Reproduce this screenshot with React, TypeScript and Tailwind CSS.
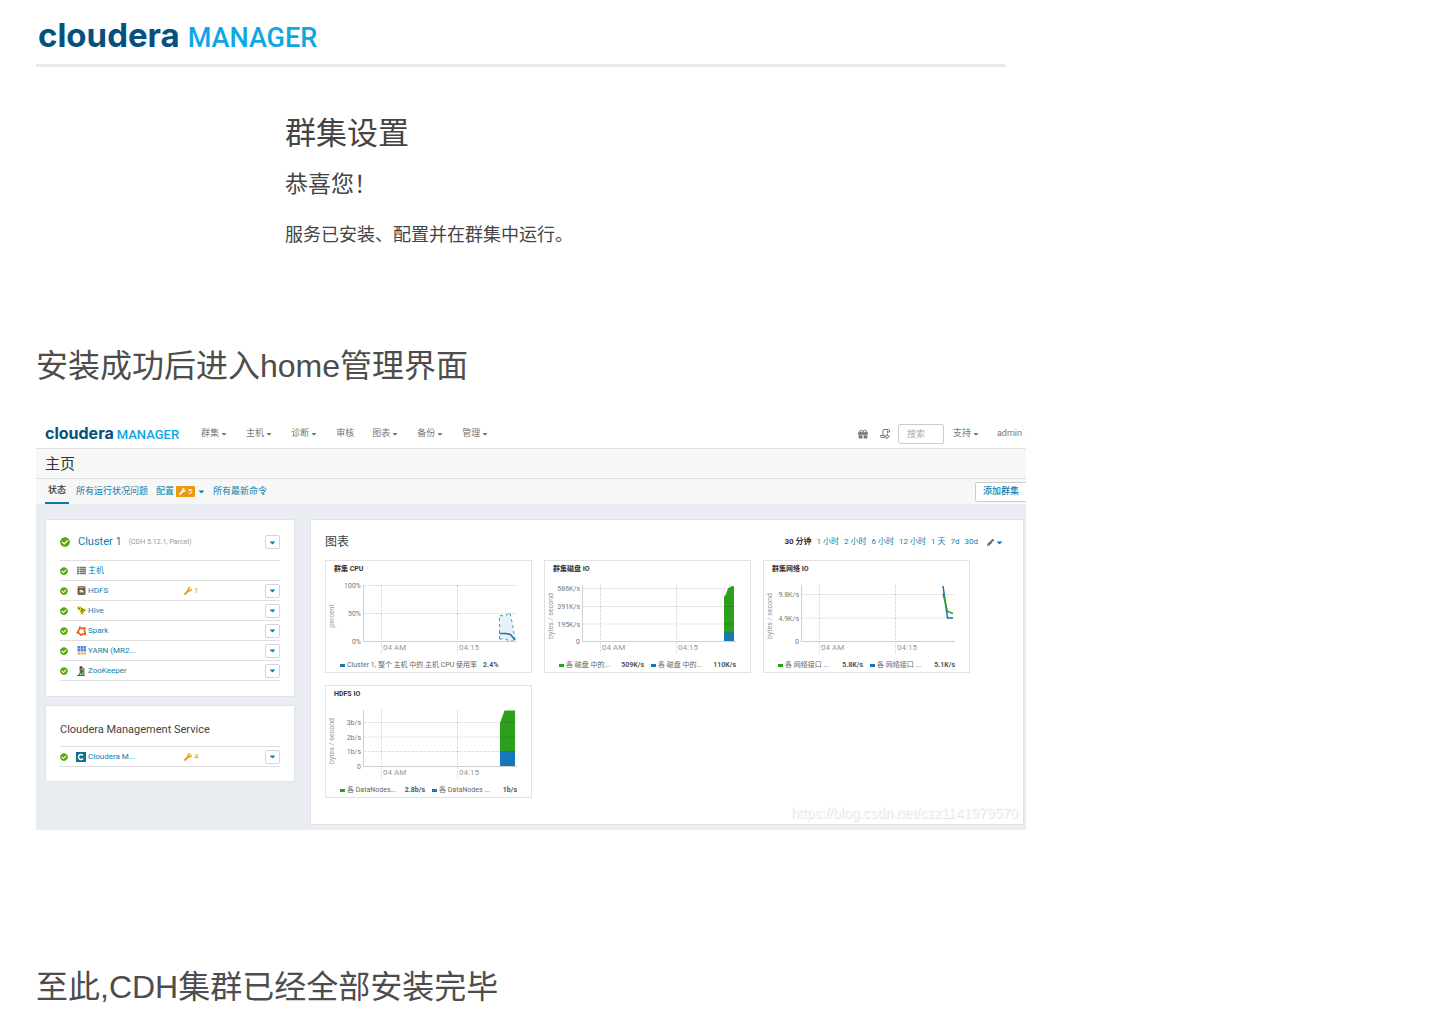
import type { ReactNode } from 'react';
import { FaCaretDown, FaCheckCircle, FaGift, FaPencilAlt, FaWrench } from 'react-icons/fa';

const NAV_ITEMS = [
  { label: '群集', menu: true },
  { label: '主机', menu: true },
  { label: '诊断', menu: true },
  { label: '审核', menu: false },
  { label: '图表', menu: true },
  { label: '备份', menu: true },
  { label: '管理', menu: true },
];

const RANGES = ['1 小时', '2 小时', '6 小时', '12 小时', '1 天', '7d', '30d'];

const GREEN = '#2ca01c';
const BLUE = '#1678b8';

const HostsIcon = () => (
  <svg viewBox="0 0 18 18" className="size-[9px]">
    <path d="M0 3h4M0 7h4M0 11h4M0 15h4M5 3h13M5 7h13M5 11h13M5 15h13" stroke="#777" strokeWidth="3" />
  </svg>
);

const HdfsIcon = () => (
  <svg viewBox="0 0 18 18" className="size-[9px]">
    <path d="M3 0h12l2 3v13l-2 2H3l-2-2V3z" fill="#7a6a4c" />
    <path d="M4 1h10v3H4z" fill="#b3a27c" />
    <path d="M3 6h12v8H3z" fill="#55493a" />
    <path d="M5 8l5-1 4 4v2H5z" fill="#e4e0d6" />
  </svg>
);

const HiveIcon = () => (
  <svg viewBox="0 0 18 18" className="size-[9px]">
    <path d="M0 1l7 0 3 3 6 1 2 4-4 4-2 5-5-2-1-5-5-3z" fill="#e8dc1e" />
    <path d="M2 3l4 3M8 3l3 4M7 10l5-2M9 14l4-3M13 7l3 2" stroke="#4a4410" strokeWidth="2" />
  </svg>
);

const SparkIcon = () => (
  <svg viewBox="0 0 18 18" className="size-[10px]">
    <path d="M7 2l3 3 6-2-1 5 2 7-5-1-3 3-3-4-4-1 3-4z" fill="none" stroke="#ea5f24" strokeWidth="3" strokeLinejoin="round" />
  </svg>
);

const YarnIcon = () => (
  <svg viewBox="0 0 18 18" className="size-[9px]">
    <path d="M1 0h5v11H1zM7 0h5v11H7zM13 0h5v11h-5z" fill="#4f86d8" />
    <path d="M1 5h17" stroke="#b9d0f2" />
    <path d="M1 13h5v4H1zM7 13h5v4H7zM13 13h5v4h-5z" fill="#efa45c" />
  </svg>
);

const ZooKeeperIcon = () => (
  <svg viewBox="0 0 18 18" className="size-[10px]">
    <circle cx="9" cy="3" r="3" fill="#6b4a34" />
    <path d="M6 6h6l2 4-2 1v6h-2l-1-4-3 4H4l3-6z" fill="#3c7a3e" />
    <path d="M14 3v14M2 17h14" stroke="#6b5a48" strokeWidth="2" />
  </svg>
);

const ClouderaIcon = () => (
  <svg viewBox="0 0 20 20" className="size-[10px]">
    <rect width="20" height="20" fill="#0f6f8f" />
    <path d="M14 7a5 5 0 1 0 0 6" fill="none" stroke="#fff" strokeWidth="3" />
  </svg>
);

// running commands, a scroll with a small gear in the corner
const CommandsIcon = () => (
  <svg viewBox="0 0 20 20" className="size-[10px]" fill="none" stroke="currentColor" strokeWidth="2">
    <path d="M6 13V3q0-2 2-2h9q2 0 2 2v3h-4V3M15 6v3M1 13h8v4H3q-2 0-2-2z" />
    <circle cx="14" cy="15" r="3" />
    <path d="M14 10v2M14 18v2M9 15h2M17 15h2" />
  </svg>
);

type Service = { name: string; icon: ReactNode; issues?: number; menu?: boolean };

const CLUSTER_SERVICES: Service[] = [
  { name: '主机', icon: <HostsIcon />, menu: false },
  { name: 'HDFS', icon: <HdfsIcon />, issues: 1 },
  { name: 'Hive', icon: <HiveIcon /> },
  { name: 'Spark', icon: <SparkIcon /> },
  { name: 'YARN (MR2...', icon: <YarnIcon /> },
  { name: 'ZooKeeper', icon: <ZooKeeperIcon /> },
];

const MANAGEMENT_SERVICES: Service[] = [{ name: 'Cloudera M...', icon: <ClouderaIcon />, issues: 4 }];

const MenuButton = ({ label }: { label: string }) => (
  <button
    type="button"
    aria-label={label}
    className="flex h-[14px] w-[15px] items-center justify-center rounded-[2px] border border-gray-300 bg-white text-[#0b7fad]"
  >
    <FaCaretDown className="size-[9px]" />
  </button>
);

const ServiceList = ({ services }: { services: Service[] }) => (
  <ul className="border-b border-[#dedede]">
    {services.map((service) => (
      <li key={service.name} className="flex h-5 items-center border-t border-[#dedede] text-[8px]">
        <FaCheckCircle className="mr-2 size-[8px] shrink-0 text-[#5aa60c]" />
        <a href="#" className="flex w-[108px] items-center gap-[2px] text-[#0b7fad]">
          <span className="flex w-[10px] shrink-0 justify-center">{service.icon}</span>
          {service.name}
        </a>
        {service.issues && (
          <a href="#" className="flex items-center gap-[2px] text-[#eb9a10]">
            <FaWrench className="size-[8px]" />
            {service.issues}
          </a>
        )}
        {service.menu !== false && (
          <div className="ml-auto">
            <MenuButton label={service.name} />
          </div>
        )}
      </li>
    ))}
  </ul>
);

type Tick = { y: number; label: string };
type LegendItem = { color: string; label: string; value: string };

type ChartCardProps = {
  title: string;
  unit: string;
  ticks: Tick[];
  legend: LegendItem[];
  children: ReactNode;
};

const ChartCard = ({ title, unit, ticks, legend, children }: ChartCardProps) => (
  <section className="h-[113px] border border-[#e2e2e2] bg-white">
    <h3 className="h-4 pl-2 text-[7px] leading-[17px] font-bold text-[#333]">{title}</h3>
    <svg viewBox="0 0 205 80" className="block h-20 w-full" fontSize="7">
      {children}
      <g stroke="#000" strokeOpacity="0.12" strokeDasharray="3 1">
        {ticks.map((tick) => (
          <path key={tick.label} d={`M38 ${tick.y}H191`} />
        ))}
        <path d="M55.500 8V77M131.500 8V77" />
      </g>
      <path d="M37.500 8V64.500H191" fill="none" stroke="#cfcfcf" />
      {ticks.map((tick) => (
        <text key={tick.label} x="35" y={tick.y + 2.5} textAnchor="end" fill="#777">
          {tick.label}
        </text>
      ))}
      <g fontSize="8" fill="#999">
        <text x="57" y="73">04 AM</text>
        <text x="133" y="73">04:15</text>
      </g>
      <text x="8" y="39" textAnchor="middle" transform="rotate(-90 8 39)" fill="#999">
        {unit}
      </text>
    </svg>
    <ul className="flex h-4 items-center gap-[7px] pl-[14px] text-[7px] whitespace-nowrap text-[#666]">
      {legend.map((item) => (
        <li key={item.color} className={legend.length > 1 ? 'flex w-[85px] items-center' : 'flex items-center gap-1'}>
          <span className="mr-[2px] flex items-center gap-[2px]">
            <svg viewBox="0 0 5 3" className="h-[3px] w-[5px]">
              <rect width="5" height="3" fill={item.color} />
            </svg>
            {item.label}
          </span>
          <b className="ml-auto text-[#555]">{item.value}</b>
        </li>
      ))}
    </ul>
  </section>
);

const Charts = () => (
  <div className="grid grid-cols-[repeat(auto-fill,207px)] gap-3">
    <ChartCard
      title="群集 CPU"
      unit="percent"
      ticks={[{ y: 8.5, label: '100%' }, { y: 36.5, label: '50%' }, { y: 64.5, label: '0%' }]}
      legend={[{ color: BLUE, label: 'Cluster 1, 整个 主机 中的 主机 CPU 使用率', value: '2.4%' }]}
    >
      <path d="M173.500 38.500L179 39L184 35.500L187 50L189 63L184 64L179 62H173.500z" fill="#e6f1f8" />
      <path d="M173.500 62V38.500L179 39L184 35.500L187 50L189 63M173.500 62H179L184 64H189" fill="none" stroke={BLUE} strokeOpacity="0.8" strokeDasharray="3 3" />
      <path d="M173.500 56.500H180L184.500 57.500L189 63" fill="none" stroke={BLUE} strokeWidth="1.500" />
    </ChartCard>
    <ChartCard
      title="群集磁盘 IO"
      unit="bytes / second"
      ticks={[{ y: 11.5, label: '586K/s' }, { y: 29.5, label: '391K/s' }, { y: 47, label: '195K/s' }, { y: 64.5, label: '0' }]}
      legend={[
        { color: GREEN, label: '各 磁盘 中的...', value: '509K/s' },
        { color: BLUE, label: '各 磁盘 中的...', value: '110K/s' },
      ]}
    >
      <path d="M179 64.500V20L181 17L183 11.500L186 9.500L189 9V64.500z" fill={GREEN} />
      <path d="M179 64.500V54L183.500 56L189 54.500V64.500z" fill={BLUE} />
    </ChartCard>
    <ChartCard
      title="群集网络 IO"
      unit="bytes / second"
      ticks={[{ y: 17.5, label: '9.8K/s' }, { y: 41, label: '4.9K/s' }, { y: 64.5, label: '0' }]}
      legend={[
        { color: GREEN, label: '各 网络接口 ...', value: '5.8K/s' },
        { color: BLUE, label: '各 网络接口 ...', value: '5.1K/s' },
      ]}
    >
      <path d="M179 9L183.500 41H189" fill="none" stroke={BLUE} strokeWidth="1.500" />
      <path d="M179 16.500L183.500 34.500L189 36.500" fill="none" stroke={GREEN} strokeWidth="1.500" />
    </ChartCard>
    <ChartCard
      title="HDFS IO"
      unit="bytes / second"
      ticks={[{ y: 20.5, label: '3b/s' }, { y: 35, label: '2b/s' }, { y: 49.5, label: '1b/s' }, { y: 64.5, label: '0' }]}
      legend={[
        { color: GREEN, label: '各 DataNodes...', value: '2.8b/s' },
        { color: BLUE, label: '各 DataNodes ...', value: '1b/s' },
      ]}
    >
      <path d="M174 64.500V21L178.500 8.500H189V64.500z" fill={GREEN} />
      <path d="M174 49.500H189V64.500H174z" fill={BLUE} />
    </ChartCard>
  </div>
);

const SetupResult = () => (
  <section className="mr-5 text-[#444]">
    <header className="flex h-[67px] items-baseline gap-2 border-b-3 border-[#e9e9e9] pt-[15px] pl-[2px] leading-10">
      <span className="font-[Inter] text-[33px] font-bold text-[#05507c]">cloudera</span>
      <span className="text-[27px] font-medium text-[#0da7e4]">MANAGER</span>
    </header>
    <div className="pt-[46px] pl-[249px]">
      <h1 className="text-[31px] leading-[42px]">群集设置</h1>
      <h2 className="mt-[14px] text-[23px] leading-8">恭喜您！</h2>
      <p className="mt-5 text-[18px] leading-7">服务已安装、配置并在群集中运行。</p>
    </div>
  </section>
);

const TopNav = () => (
  <header className="flex h-[29px] items-center border-b border-[#e0e0e0] bg-white pl-[9px] text-[9px] text-[#777]">
    <a href="#" className="mr-[22px] flex items-baseline gap-[3px]">
      <span className="font-[Inter] text-[16px] leading-6 font-bold text-[#05507c]">cloudera</span>
      <span className="text-[13px] leading-6 font-medium text-[#0da7e4]">MANAGER</span>
    </a>
    <nav className="flex gap-[18px]">
      {NAV_ITEMS.map((item) => (
        <button key={item.label} type="button" className="flex items-center">
          {item.label}
          {item.menu && <FaCaretDown className="ml-px size-[8px]" />}
        </button>
      ))}
    </nav>
    <div className="-mr-[6px] ml-auto flex items-center">
      <button type="button" aria-label="礼物" className="mr-3">
        <FaGift className="size-[10px]" />
      </button>
      <button type="button" aria-label="命令" className="mr-2">
        <CommandsIcon />
      </button>
      <input
        type="search"
        aria-label="搜索"
        placeholder="搜索"
        className="mr-[9px] h-5 w-[46px] rounded-[2px] border border-[#ccc] bg-white pl-2 placeholder:text-[#aaa]"
      />
      <button type="button" className="mr-[17px] flex items-center gap-px">
        支持
        <FaCaretDown className="size-[8px]" />
      </button>
      <button type="button" className="flex items-center gap-[2px]">
        admin
        <FaCaretDown className="size-[8px]" />
      </button>
    </div>
  </header>
);

const Tabs = () => (
  <div className="flex h-[25px] items-center justify-between bg-[#f7f7f7] pl-[9px] text-[9px] text-[#0b7fad]">
    <nav className="flex h-full items-stretch">
      <a href="#" className="mr-[7px] flex items-center border-b-2 border-[#1279a4] px-[3px] font-medium text-[#333]">状态</a>
      <a href="#" className="mr-[8px] flex items-center">所有运行状况问题</a>
      <button type="button" className="mr-[7px] flex items-center gap-[2px]">
        配置
        <span className="flex h-[11px] w-[19px] items-center justify-center gap-[2px] rounded-[1px] bg-[#eb9a10] text-[8px] text-white">
          <FaWrench className="size-[7px]" />5
        </span>
        <FaCaretDown className="size-[9px]" />
      </button>
      <a href="#" className="flex items-center">所有最新命令</a>
    </nav>
    <button type="button" className="-mr-px h-5 rounded-[2px] border border-[#ccc] bg-white px-[7px] font-medium">
      添加群集
    </button>
  </div>
);

const Dashboard = () => (
  <section className="relative overflow-hidden bg-[#e9ecf0]">
    <TopNav />
    <h2 className="h-[30px] border-b border-[#dedede] bg-[#f7f7f7] pl-[9px] text-[15px] leading-[30px] text-[#333]">主页</h2>
    <Tabs />
    <div className="flex gap-[15px] pt-[15px] pr-[2px] pb-[5px] pl-[9px]">
      <aside className="flex w-[250px] shrink-0 flex-col gap-2">
        <section className="border border-[#e0e2e4] bg-white px-[14px] pb-[15px]">
          <div className="flex h-10 items-center pt-1">
            <FaCheckCircle className="mr-2 size-[10px] text-[#5aa60c]" />
            <a href="#" className="mr-[7px] text-[11px] text-[#0b7fad]">Cluster 1</a>
            <span className="text-[7px] text-[#999]">(CDH 5.12.1, Parcel)</span>
            <div className="ml-auto">
              <MenuButton label="Cluster 1" />
            </div>
          </div>
          <ServiceList services={CLUSTER_SERVICES} />
        </section>
        <section className="border border-[#e0e2e4] bg-white px-[14px] pb-[14px]">
          <h3 className="h-10 pt-[7px] text-[11px] leading-[33px] text-[#444]">Cloudera Management Service</h3>
          <ServiceList services={MANAGEMENT_SERVICES} />
        </section>
      </aside>
      <main className="min-h-[306px] flex-1 border border-[#e0e2e4] bg-white px-[14px]">
        <div className="flex h-10 items-center justify-between pt-1">
          <h3 className="text-[12px] text-[#444]">图表</h3>
          <div className="mr-[5px] flex items-center gap-[5px] text-[8px] text-[#0b7fad]">
            <b className="text-[#333]">30 分钟</b>
            {RANGES.map((range) => (
              <a key={range} href="#">{range}</a>
            ))}
            <button type="button" aria-label="编辑" className="ml-[4px] flex items-center gap-px">
              <FaPencilAlt className="size-[7px] text-[#555]" />
              <FaCaretDown className="size-[9px]" />
            </button>
          </div>
        </div>
        <Charts />
      </main>
    </div>
    <span className="absolute right-2 bottom-[7px] font-['Liberation_Sans'] text-[14px] leading-5 text-[#fafafa] [text-shadow:1px_1px_1px_#ddd]">
      https://blog.csdn.net/czz1141979570
    </span>
  </section>
);

export default function App() {
  return (
    <article className="max-w-[1062px] bg-white px-9 font-[Roboto,'Noto_Sans_CJK_SC',sans-serif]">
      <SetupResult />
      <p className="mt-[97px] font-['Liberation_Sans','Noto_Sans_CJK_SC',sans-serif] text-[32px] leading-10 text-[#4d4d4d]">
        安装成功后进入home管理界面
      </p>
      <div className="mt-[34px]">
        <Dashboard />
      </div>
      <p className="mt-[137px] font-['Liberation_Sans','Noto_Sans_CJK_SC',sans-serif] text-[32px] leading-10 text-[#4d4d4d]">
        至此,CDH集群已经全部安装完毕
      </p>
    </article>
  );
}
